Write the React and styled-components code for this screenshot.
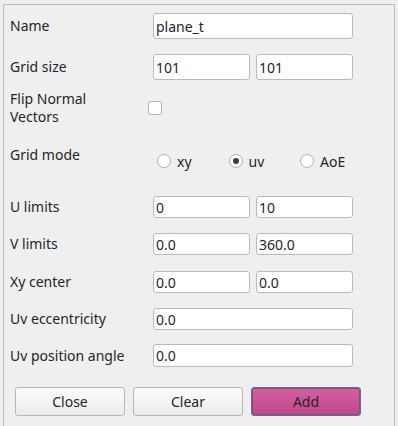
import * as React from "react";
import styled, { createGlobalStyle } from "styled-components";

const GlobalStyle = createGlobalStyle`
  body {
    margin: 0;
    background: #efefef;
    font-family: "Noto Sans", "DejaVu Sans", sans-serif;
    color: #232627;
  }
`;

export default function App() {
  const [mode, setMode] = React.useState("uv");

  const pairRows = [
    { label: "U limits", values: ["0", "10"], mt: 28 },
    { label: "V limits", values: ["0.0", "360.0"], mt: 15 },
    { label: "Xy center", values: ["0.0", "0.0"], mt: 16 },
  ];

  return (
    <>
      <GlobalStyle />
      <Frame>
        <Row $mt={8} $h={26}>
          <Label>Name</Label>
          <Input defaultValue="plane_t" $w={200} />
        </Row>

        <Row $mt={15} $h={26}>
          <Label>Grid size</Label>
          <Pair>
            <Input defaultValue="101" />
            <Input defaultValue="101" />
          </Pair>
        </Row>

        <Row $mt={10} $h={36}>
          <Label>
            Flip Normal
            <br />
            Vectors
          </Label>
          <Checkbox />
        </Row>

        <Row $mt={16} $h={26}>
          <Label>Grid mode</Label>
          <RadioGroup>
            {["xy", "uv", "AoE"].map((m) => (
              <RadioOption key={m} onClick={() => setMode(m)}>
                <RadioCircle $checked={mode === m} />
                <span>{m}</span>
              </RadioOption>
            ))}
          </RadioGroup>
        </Row>

        {pairRows.map((r) => (
          <Row key={r.label} $mt={r.mt} $h={22}>
            <Label>{r.label}</Label>
            <Pair>
              <Input defaultValue={r.values[0]} />
              <Input defaultValue={r.values[1]} />
            </Pair>
          </Row>
        ))}

        <Row $mt={15} $h={22}>
          <Label>Uv eccentricity</Label>
          <Input defaultValue="0.0" $w={200} />
        </Row>

        <Row $mt={14} $h={23}>
          <Label>Uv position angle</Label>
          <Input defaultValue="0.0" $w={200} />
        </Row>

        <ButtonBar>
          <Button>Close</Button>
          <Button>Clear</Button>
          <Button $primary>Add</Button>
        </ButtonBar>
      </Frame>
    </>
  );
}

const Frame = styled.div`
  box-sizing: border-box;
  margin: 4px 0 0 3px;
  width: 392px;
  height: 440px;
  border: 1px solid #bcbcbc;
  display: flex;
  flex-direction: column;
  padding-left: 6px;
`;

const Row = styled.div`
  display: flex;
  align-items: center;
  margin-top: ${(p) => p.$mt}px;
  height: ${(p) => p.$h}px;
`;

const Label = styled.div`
  width: 143px;
  flex-shrink: 0;
  font-size: 14px;
  line-height: 18px;
  color: #232627;
`;

const Pair = styled.div`
  display: grid;
  grid-template-columns: 97px 97px;
  gap: 6px;
  height: 100%;
`;

const Input = styled.input`
  box-sizing: border-box;
  width: ${(p) => (p.$w ? `${p.$w}px` : "100%")};
  height: 100%;
  margin: 0;
  padding: 0 2px;
  border: 1px solid #bababa;
  border-radius: 3px;
  background: #fff;
  font-family: "Noto Sans", "DejaVu Sans", sans-serif;
  font-size: 14px;
  color: #232627;
  outline: none;
`;

const Checkbox = styled.span`
  box-sizing: border-box;
  display: block;
  width: 14px;
  height: 14px;
  margin-left: -5px;
  border: 1px solid #b4b4b4;
  border-radius: 2px;
  background: #fff;
`;

const RadioGroup = styled.div`
  display: flex;
  height: 26px;
  padding-top: 11px;
  padding-left: 4px;
  box-sizing: border-box;
`;

const RadioOption = styled.label`
  display: flex;
  align-items: center;
  gap: 6px;
  width: 71.5px;
  height: 16px;
  font-size: 14px;
  cursor: pointer;
`;

const RadioCircle = styled.span`
  box-sizing: border-box;
  width: 14px;
  height: 14px;
  border-radius: 50%;
  border: 1px solid #b0b0b0;
  background: #fff;
  display: flex;
  align-items: center;
  justify-content: center;

  &::after {
    content: "";
    display: ${(p) => (p.$checked ? "block" : "none")};
    width: 6px;
    height: 6px;
    border-radius: 50%;
    background: #3b3d3f;
  }
`;

const ButtonBar = styled.div`
  display: flex;
  gap: 8px;
  margin-top: 20px;
  padding-left: 5px;
`;

const Button = styled.button`
  box-sizing: border-box;
  width: 110px;
  height: 29px;
  margin: 0;
  border-radius: 3px;
  font-family: "Noto Sans", "DejaVu Sans", sans-serif;
  font-size: 14px;
  color: #232627;
  cursor: pointer;
  border: 1px solid ${(p) => (p.$primary ? "#3f78a0" : "#b7b7b7")};
  background: ${(p) =>
    p.$primary
      ? "linear-gradient(#d560a0, #bf4887)"
      : "linear-gradient(#fbfbfb, #ececec)"};
  box-shadow: ${(p) => (p.$primary ? "inset 0 0 0 1px #a83d78" : "none")};
`;
